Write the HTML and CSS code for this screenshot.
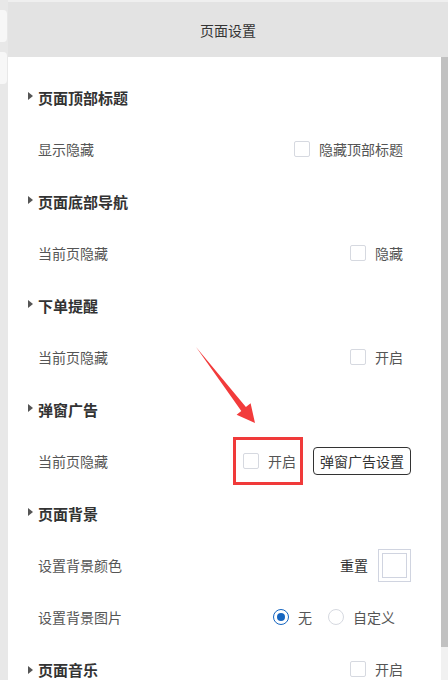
FILE: index.html
```html
<!DOCTYPE html>
<html lang="zh-CN">
<head>
    <meta charset="UTF-8">
    <meta name="viewport" content="width=device-width, initial-scale=1.0">
    <title>页面设置</title>
    <link rel="stylesheet" href="styles.css">
</head>
<body>

<div class="page">
    <div class="side">
        <div class="side-tab"></div>
        <div class="side-tab"></div>
    </div>

    <div class="panel">
        <div class="panel-header">页面设置</div>

        <div class="panel-body">
            <div class="content">
                <div class="section-title"><span class="caret"></span>页面顶部标题</div>
                <div class="row">
                    <span class="row-label">显示隐藏</span>
                    <label class="check"><span class="box"></span>隐藏顶部标题</label>
                </div>

                <div class="section-title"><span class="caret"></span>页面底部导航</div>
                <div class="row">
                    <span class="row-label">当前页隐藏</span>
                    <label class="check"><span class="box"></span>隐藏</label>
                </div>

                <div class="section-title"><span class="caret"></span>下单提醒</div>
                <div class="row">
                    <span class="row-label">当前页隐藏</span>
                    <label class="check"><span class="box"></span>开启</label>
                </div>

                <div class="section-title"><span class="caret"></span>弹窗广告</div>
                <div class="row">
                    <span class="row-label">当前页隐藏</span>
                    <div class="controls">
                        <span class="highlight">
                            <label class="check plain"><span class="box"></span>开启</label>
                        </span>
                        <button class="outline-btn">弹窗广告设置</button>
                    </div>
                </div>

                <div class="section-title"><span class="caret"></span>页面背景</div>
                <div class="row">
                    <span class="row-label">设置背景颜色</span>
                    <div class="controls">
                        <span class="reset">重置</span>
                        <span class="swatch"><span class="swatch-inner"></span></span>
                    </div>
                </div>
                <div class="row">
                    <span class="row-label">设置背景图片</span>
                    <div class="controls">
                        <label class="radio checked"><span class="dot"></span>无</label>
                        <label class="radio"><span class="dot"></span>自定义</label>
                    </div>
                </div>

                <div class="section-title split">
                    <span><span class="caret"></span>页面音乐</span>
                    <label class="check"><span class="box"></span>开启</label>
                </div>
            </div>

            <div class="scrollbar"><div class="thumb"></div></div>

            <!-- 指示箭头 -->
            <svg class="pointer" width="80" height="90" viewBox="0 0 80 90">
                <polygon points="2,1 51.9,61.1 56.6,57.3 61,77 42.6,68.7 47.3,64.9" fill="#f23b3b"/>
            </svg>
        </div>
    </div>
</div>

</body>
</html>
```

FILE: styles.css
```css
body {
    margin: 0;
    font-family: "Noto Sans CJK SC", "Liberation Sans", sans-serif;
    background-color: #e8e8e8;
    color: #333;
}
.page {
    display: flex;
    width: 448px;
    height: 680px;
    overflow: hidden;
}
.side {
    width: 8px;
    flex-shrink: 0;
    padding-top: 10px;
    background-color: #e8e8e8;
}
.side-tab {
    width: 7px;
    height: 32px;
    margin-bottom: 10px;
    background-color: #f7f7f7;
    border-radius: 0 4px 4px 0;
}
.panel {
    flex: 1;
    display: flex;
    flex-direction: column;
    min-height: 0;
}
.panel-header {
    height: 55px;
    flex-shrink: 0;
    border-top: 2px solid #efefef;
    background-color: #e3e3e3;
    display: flex;
    align-items: center;
    justify-content: center;
    font-size: 14px;
    color: #333;
}
.panel-body {
    position: relative;
    flex: 1;
    min-height: 0;
    overflow: hidden;
    display: flex;
    background-color: #fff;
}
.content {
    flex: 1;
    padding: 14px 30px 0 20px;
}
.section-title {
    height: 52px;
    display: flex;
    align-items: center;
    font-size: 15px;
    font-weight: bold;
    color: #333;
}
.section-title.split {
    justify-content: space-between;
}
.section-title.split .check {
    font-weight: normal;
}
.caret {
    display: inline-block;
    width: 0;
    height: 0;
    border-top: 4.5px solid transparent;
    border-bottom: 4.5px solid transparent;
    border-left: 5px solid #555;
    margin-right: 5px;
    vertical-align: middle;
    position: relative;
    top: -1px;
}
.row {
    height: 52px;
    display: flex;
    align-items: center;
    justify-content: space-between;
    padding-left: 10px;
    font-size: 14px;
}
.row-label {
    color: #555;
}
.controls {
    display: flex;
    align-items: center;
}
.check, .radio {
    display: flex;
    align-items: center;
    font-size: 14px;
    color: #555;
}
.check {
    margin-right: 8px;
}
.check.plain {
    margin-right: 0;
}
.box {
    width: 14px;
    height: 14px;
    border: 1px solid #d6d9e0;
    border-radius: 2px;
    margin-right: 9px;
    background-color: #fff;
}
.highlight {
    display: flex;
    align-items: center;
    height: 42px;
    padding: 0 4px 0 7px;
    border: 3px solid #f03a3a;
    margin-right: 10px;
}
.outline-btn {
    height: 28px;
    padding: 0 6px;
    border: 1px solid #333;
    border-radius: 4px;
    background-color: #fff;
    font-family: inherit;
    font-size: 14px;
    color: #333;
}
.reset {
    color: #333;
    margin-right: 10px;
}
.swatch {
    width: 31px;
    height: 31px;
    border: 1px solid #d0d4e0;
    display: flex;
    align-items: center;
    justify-content: center;
}
.swatch-inner {
    width: 23px;
    height: 23px;
    border: 1px solid #d0d4e0;
}
.radio {
    margin-right: 16px;
}
.dot {
    width: 14px;
    height: 14px;
    border: 1px solid #d6d9e0;
    border-radius: 50%;
    margin-right: 9px;
    display: flex;
    align-items: center;
    justify-content: center;
}
.radio.checked .dot {
    border-color: #1565c0;
}
.radio.checked .dot::after {
    content: "";
    width: 8px;
    height: 8px;
    border-radius: 50%;
    background-color: #1565c0;
}
.scrollbar {
    width: 7px;
    flex-shrink: 0;
    background-color: #f1f1f1;
}
.thumb {
    height: 590px;
    background-color: #c1c1c1;
}
.pointer {
    position: absolute;
    left: 186px;
    top: 289px;
}
```
